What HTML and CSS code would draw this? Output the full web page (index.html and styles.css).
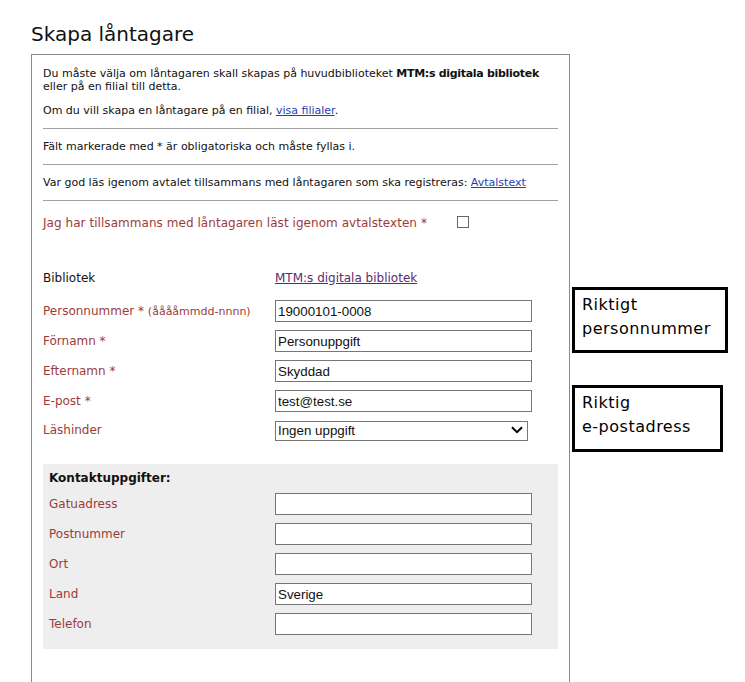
FILE: index.html
```html
<!DOCTYPE html>
<html lang="sv">
<head>
<meta charset="utf-8">
<title>Skapa låntagare</title>
<link rel="stylesheet" href="styles.css">
</head>
<body>
<div class="page">
  <h1 class="title">Skapa låntagare</h1>
  <div class="panel">
    <p class="note">Du måste välja om låntagaren skall skapas på huvudbiblioteket <b>MTM:s digitala bibliotek</b><br>eller på en filial till detta.</p>
    <p class="note note-gap">Om du vill skapa en låntagare på en filial, <a class="link" href="#">visa filialer</a>.</p>
    <hr class="rule">
    <p class="note">Fält markerade med * är obligatoriska och måste fyllas i.</p>
    <hr class="rule">
    <p class="note">Var god läs igenom avtalet tillsammans med låntagaren som ska registreras: <a class="link" href="#">Avtalstext</a></p>
    <hr class="rule">
    <div class="agree">
      <span class="label agree-label">Jag har tillsammans med låntagaren läst igenom avtalstexten *</span>
      <input type="checkbox" class="check">
    </div>

    <div class="lib-row">
      <span class="plain lib-label">Bibliotek</span>
      <a class="lib-link" href="#">MTM:s digitala bibliotek</a>
    </div>

    <div class="form">
      <span class="label">Personnummer * <small class="hint">(ååååmmdd-nnnn)</small></span>
      <input class="field" type="text" value="19000101-0008">

      <span class="label">Förnamn *</span>
      <input class="field" type="text" value="Personuppgift">

      <span class="label">Efternamn *</span>
      <input class="field" type="text" value="Skyddad">

      <span class="label">E-post *</span>
      <input class="field" type="text" value="test@test.se">

      <span class="label">Läshinder</span>
      <div class="select-wrap">
        <select class="select"><option>Ingen uppgift</option></select>
        <svg class="chevron" width="12" height="8" viewBox="0 0 12 8"><path d="M1 1.2 L6 6.2 L11 1.2" fill="none" stroke="#000" stroke-width="2"/></svg>
      </div>
    </div>

    <div class="contact">
      <div class="contact-head">Kontaktuppgifter:</div>
      <div class="contact-grid">
        <span class="label">Gatuadress</span>
        <input class="field" type="text" value="">
        <span class="label">Postnummer</span>
        <input class="field" type="text" value="">
        <span class="label">Ort</span>
        <input class="field" type="text" value="">
        <span class="label">Land</span>
        <input class="field" type="text" value="Sverige">
        <span class="label">Telefon</span>
        <input class="field" type="text" value="">
      </div>
    </div>
  </div>

  <div class="callout callout-pnr">Riktigt<br>personnummer</div>
  <div class="callout callout-mail">Riktig<br>e-postadress</div>
</div>
</body>
</html>
```
FILE: styles.css
```css
html, body {
  margin: 0;
  padding: 0;
  background: #fff;
  overflow: hidden;
}

.page {
  position: relative;
  padding: 22px 0 0 31px;
  font-family: "DejaVu Sans", Verdana, sans-serif;
  color: #000;
}

.title {
  margin: 0 0 8px 0;
  font-size: 20px;
  font-weight: normal;
  line-height: 24px;
  color: #111;
}

.panel {
  box-sizing: border-box;
  width: 539px;
  border: 1px solid #8a8a8a;
  padding: 12px 11px 60px 11px;
}

.note {
  margin: 0;
  font-size: 11px;
  line-height: 13px;
  color: #111;
}

.note b {
  letter-spacing: -0.3px;
}

.note-gap {
  margin-top: 11px;
}

.link {
  color: #1f3fb3;
  text-decoration: underline;
}

.rule {
  border: 0;
  border-top: 1px solid #a0a0a0;
  height: 0;
  margin: 11px 0;
}

.agree {
  display: flex;
  align-items: center;
  height: 22px;
}

.agree-label {
  width: 414px;
  letter-spacing: 0.05px;
}

.check {
  appearance: none;
  -webkit-appearance: none;
  box-sizing: border-box;
  width: 12px;
  height: 12px;
  margin: -3px 0 0 0;
  border: 1px solid #666;
  background: #fff;
}

.label {
  font-size: 12px;
  line-height: 15px;
  color: #9c3b3b;
}

.hint {
  font-size: 11px;
}

.plain {
  font-size: 12px;
  line-height: 15px;
  color: #111;
}

.lib-row {
  display: flex;
  align-items: center;
  height: 22px;
  margin-top: 33px;
  margin-bottom: 11px;
}

.lib-label {
  width: 232px;
}

.lib-link {
  font-size: 12px;
  line-height: 15px;
  color: #5b2a73;
  text-decoration: underline;
}

.form {
  display: grid;
  grid-template-columns: 232px 257px;
  grid-template-rows: repeat(4, 22px) 20px;
  row-gap: 8px;
  align-items: center;
}

.field {
  box-sizing: border-box;
  width: 257px;
  height: 22px;
  margin: 0;
  padding: 0 2px;
  border: 1px solid #767676;
  border-radius: 0;
  background: #fff;
  font-family: "Liberation Sans", Arial, sans-serif;
  font-size: 13.33px;
  color: #111;
}

.select-wrap {
  position: relative;
  width: 253px;
  height: 20px;
}

.select {
  appearance: none;
  -webkit-appearance: none;
  box-sizing: border-box;
  width: 253px;
  height: 20px;
  margin: 0;
  padding: 0 2px;
  border: 1px solid #767676;
  border-radius: 0;
  background: #fff;
  font-family: "Liberation Sans", Arial, sans-serif;
  font-size: 13.33px;
  color: #111;
}

.chevron {
  position: absolute;
  right: 5px;
  top: 6px;
  pointer-events: none;
}

.contact {
  margin-top: 24px;
  background: #eeeeee;
  padding: 7px 0 14px 6px;
}

.contact-head {
  font-size: 12px;
  line-height: 15px;
  font-weight: bold;
  color: #111;
  margin-bottom: 7px;
}

.contact-grid {
  display: grid;
  grid-template-columns: 226px 257px;
  grid-auto-rows: 22px;
  row-gap: 8px;
  align-items: center;
}

.callout {
  position: absolute;
  left: 572px;
  box-sizing: border-box;
  border: 3px solid #000;
  background: #fff;
  padding: 3px 0 0 7px;
  font-family: "DejaVu Sans", Verdana, sans-serif;
  font-size: 16px;
  letter-spacing: 0.5px;
  line-height: 24px;
  color: #000;
}

.callout-pnr {
  top: 287px;
  width: 156px;
  height: 66px;
}

.callout-mail {
  top: 385px;
  width: 151px;
  height: 67px;
}
```
